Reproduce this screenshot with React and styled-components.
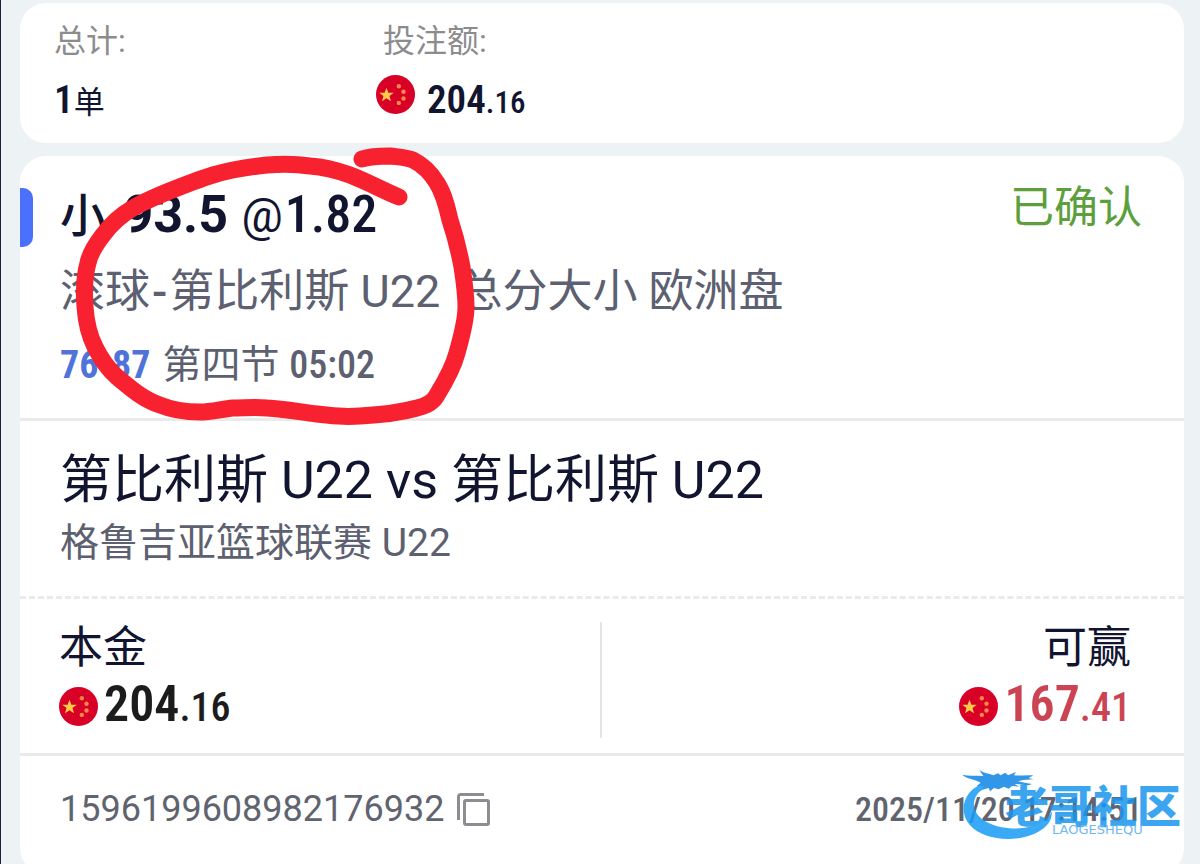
import styled, { createGlobalStyle } from "styled-components";

const GlobalStyle = createGlobalStyle`
  * {
    box-sizing: border-box;
  }

  body {
    margin: 0;
    background: #edf2f5;
    color: #12152f;
    font-family: Roboto, "Noto Sans CJK SC", sans-serif;
  }
`;

const Page = styled.main`
  position: relative;
  display: flex;
  flex-direction: column;
  gap: 13px;
  min-height: 100vh;
  padding: 3px 16px 0 19px;
  border-left: 1px solid #1d2137;
`;

const Card = styled.section`
  position: relative;
  background: #fff;
  border-radius: 26px;
`;

const Summary = styled(Card)`
  display: grid;
  grid-template-columns: 322px 1fr;
  padding: 18px 34px 12px;
`;

const SummaryItem = styled.div`
  display: flex;
  flex-direction: column;
  gap: 14px;
`;

const SummaryLabel = styled.span`
  padding-left: ${({ $inset }) => ($inset ? "7px" : "0")};
  color: #8c8c8e;
  font-size: 32px;
  line-height: 40px;
`;

const SummaryValue = styled.div`
  display: flex;
  align-items: flex-start;
  gap: 12px;
  font-size: 31px;
  line-height: 56px;
`;

const Num = styled.span`
  font-family: "Roboto Condensed", Roboto, sans-serif;
  font-size: ${({ $size }) => $size}px;
  font-weight: ${({ $weight }) => $weight || 500};
  line-height: 1;
`;

const Head = styled.header`
  display: flex;
  justify-content: space-between;
  padding: 24px 42px 20px 40px;
  border-bottom: 3px solid #e9eaec;
`;

const Marker = styled.span`
  position: absolute;
  top: 32px;
  left: 0;
  width: 13px;
  height: 59px;
  border-radius: 0 10px 10px 0;
  background: #4b70fb;
`;

const Pick = styled.h1`
  margin: 0;
  font-size: 46px;
  font-weight: 500;
  line-height: 72px;
`;

const Line = styled.b`
  margin: 0 2px 0 6px;
  font-size: 52px;
  line-height: 1;
`;

const At = styled.span`
  margin-right: 2px;
  font-weight: 400;
`;

const Market = styled.p`
  margin: 0;
  color: #5c6070;
  font-size: 45px;
  line-height: 80px;
`;

const Dash = styled.span`
  margin: 0 2px;
  font-weight: 500;
`;

const BetType = styled.span`
  margin-left: 6px;
`;

const Clock = styled.p`
  display: flex;
  align-items: baseline;
  gap: 12px;
  margin: 0;
  color: #5c6070;
  font-size: 39px;
  line-height: 66px;
`;

const Score = styled(Num)`
  color: #4f73d8;
`;

const Status = styled.span`
  color: #5c9f3c;
  font-size: 44px;
  line-height: 56px;
`;

const Match = styled.div`
  padding: 24px 40px 27px;
  border-bottom: 3px dashed #e9eaec;
`;

const Teams = styled.h2`
  margin: 0;
  font-size: 52px;
  font-weight: 400;
  line-height: 72px;
`;

const League = styled.p`
  margin: 0;
  color: #5c6070;
  font-size: 39px;
  line-height: 52px;
`;

const Amounts = styled.div`
  display: grid;
  grid-template-columns: 1fr 1fr;
  padding: 23px 0 15px;
  border-bottom: 3px solid #e9eaec;
`;

const Amount = styled.div`
  display: flex;
  flex-direction: column;
  align-items: ${({ $end }) => ($end ? "flex-end" : "flex-start")};
  padding: 0 ${({ $end }) => ($end ? "53px" : "39px")};
  border-right: ${({ $end }) => ($end ? "0" : "2px solid #e2e4e8")};
  font-size: 44px;
  line-height: 52px;
`;

const Money = styled.div`
  display: flex;
  align-items: center;
  gap: 6px;
  line-height: 64px;
  color: ${({ $win }) => ($win ? "#cb4453" : "#1c1c1c")};
`;

const Foot = styled.footer`
  position: relative;
  display: flex;
  align-items: center;
  justify-content: space-between;
  height: 118px;
  padding: 0 42px 12px 40px;
  color: #60646f;
  font-size: 36px;
`;

const Order = styled.div`
  display: flex;
  align-items: center;
  gap: 13px;
`;

const CopyButton = styled.button`
  display: flex;
  padding: 0;
  border: 0;
  background: none;
`;

const Scribble = styled.svg`
  position: absolute;
  top: 145px;
  left: 69px;
  pointer-events: none;
`;

const Watermark = styled.div`
  position: absolute;
  top: 0;
  right: 0;
  width: 234px;
  padding: 30px 0 0 55px;
  opacity: 0.85;
  pointer-events: none;
`;

const Dragon = styled.svg`
  position: absolute;
  top: 0;
  left: 0;
`;

const Brand = styled.div`
  color: #1a96ee;
  font-family: "Noto Sans CJK SC", sans-serif;
  font-size: 44px;
  font-weight: 900;
  line-height: 36px;
  white-space: nowrap;
`;

const BrandLatin = styled.div`
  padding-left: 47px;
  color: #58aeea;
  font-family: "DejaVu Sans", sans-serif;
  font-size: 13px;
  line-height: 16px;
`;

const Flag = () => (
  <svg width="39" height="39" viewBox="-19.5 -19.5 39 39" role="img" aria-label="CNY">
    <circle r="19.5" fill="#d80027" />
    <path
      fill="#ffc94a"
      d="M-9-6.8l1.9 5.1h5.3l-4.2 3.3 1.5 5.2L-9 3.7l-4.5 3.1 1.5-5.2-4.2-3.3h5.3z"
    />
    <g fill="#f6864a">
      <circle cx="3.3" cy="-8.3" r="2.2" />
      <circle cx="8" cy="-2.7" r="2.2" />
      <circle cx="8" cy="4" r="2.2" />
      <circle cx="3.3" cy="8.4" r="2.2" />
    </g>
  </svg>
);

const CopyIcon = () => (
  <svg width="33" height="33" viewBox="0 0 33 33" fill="none" stroke="#8b8d90" strokeWidth="3">
    <path d="M1.5 27V3.5a2 2 0 0 1 2-2H27" />
    <rect x="7.5" y="7.5" width="24" height="24" rx="1.5" />
  </svg>
);

const Amt = ({ whole, cents, size, small }) => (
  <span>
    <Num $size={size} $weight={600}>{whole}</Num>
    <Num $size={small}>{cents}</Num>
  </span>
);

export default function App() {
  return (
    <>
      <GlobalStyle />
      <Page>
        <Summary>
          <SummaryItem>
            <SummaryLabel>总计:</SummaryLabel>
            <SummaryValue>
              <span><Num $size={39} $weight={600}>1</Num>单</span>
            </SummaryValue>
          </SummaryItem>
          <SummaryItem>
            <SummaryLabel $inset>投注额:</SummaryLabel>
            <SummaryValue>
              <Flag />
              <Amt whole="204" cents=".16" size={39} small={31} />
            </SummaryValue>
          </SummaryItem>
        </Summary>

        <Card>
          <Marker />
          <Head>
            <div>
              <Pick>
                小 <Line>93.5</Line> <At>@</At><Num $size={52}>1.82</Num>
              </Pick>
              <Market>
                滚球<Dash>-</Dash>第比利斯 U22 <BetType>总分大小 欧洲盘</BetType>
              </Market>
              <Clock>
                <Score $size={38} $weight={700}>76-87</Score>
                <span>第四节 <Num $size={38}>05:02</Num></span>
              </Clock>
            </div>
            <Status>已确认</Status>
          </Head>

          <Match>
            <Teams>第比利斯 U22 vs 第比利斯 U22</Teams>
            <League>格鲁吉亚篮球联赛 U22</League>
          </Match>

          <Amounts>
            <Amount>
              <span>本金</span>
              <Money>
                <Flag />
                <Amt whole="204" cents=".16" size={50} small={40} />
              </Money>
            </Amount>
            <Amount $end>
              <span>可赢</span>
              <Money $win>
                <Flag />
                <Amt whole="167" cents=".41" size={50} small={40} />
              </Money>
            </Amount>
          </Amounts>

          <Foot>
            <Order>
              <span>1596199608982176932</span>
              <CopyButton type="button" aria-label="复制"><CopyIcon /></CopyButton>
            </Order>
            <Num $size={34}>2025/11/20 17:14:51</Num>
            <Watermark>
              <Dragon width="130" height="90" viewBox="0 0 390 270">
                <path
                  fill="#189cf5"
                  d="M108 80C42 96 22 165 60 208c45 50 162 56 222 8 18-14 24-32 24-50-14 34-68 56-128 51C112 211 68 180 72 140c3-24 18-40 44-48z"
                />
                <path
                  fill="#0f86e4"
                  d="M36 56c20 4 40 2 64 4L88 42c14 10 28 10 42 16l14-6 8 6 14-8 8 8 24-10-6 10c18 2 38-2 58 0l-14 8 14 4-30 2-16 4 20 4 22 4-10 4c-14 0-28-4-42-4l14 8-22-2-10 8-14-6-16 8-14-4-12 10-4-10-22 6 8-12-22 0 12-10C78 70 52 70 36 56z"
                />
              </Dragon>
              <Brand>老哥社区</Brand>
              <BrandLatin>LAOGESHEQU</BrandLatin>
            </Watermark>
          </Foot>
        </Card>

        <Scribble width="420" height="290" viewBox="70 145 420 290" fill="none" aria-hidden="true">
          <path
            stroke="#f7212f"
            strokeWidth="17"
            strokeLinecap="round"
            strokeLinejoin="round"
            d="M399 197C382 190 366 181 350 175C336 170 324 167 310 166C296 164 282 164 267 165C248 167 230 170 213 175C197 180 182 186 167 192C155 197 143 202 133 208C121 215 111 224 103 235C96 244 90 253 88 263C84 277 84 293 85 307C86 321 89 335 95 347C101 359 108 369 117 377C130 388 144 400 160 405C172 410 186 412 200 412C211 412 222 409 233 408C244 408 256 407 267 408C284 409 300 412 317 414C331 416 346 417 360 416C380 415 399 413 417 408C426 406 433 403 437 395C445 382 453 368 457 353C461 338 466 322 466 307C466 294 464 280 462 267C459 251 455 235 450 220C447 207 444 194 437 183C431 173 423 165 413 160C406 157 398 157 390 156C380 156 371 156 362 159"
          />
        </Scribble>
      </Page>
    </>
  );
}
